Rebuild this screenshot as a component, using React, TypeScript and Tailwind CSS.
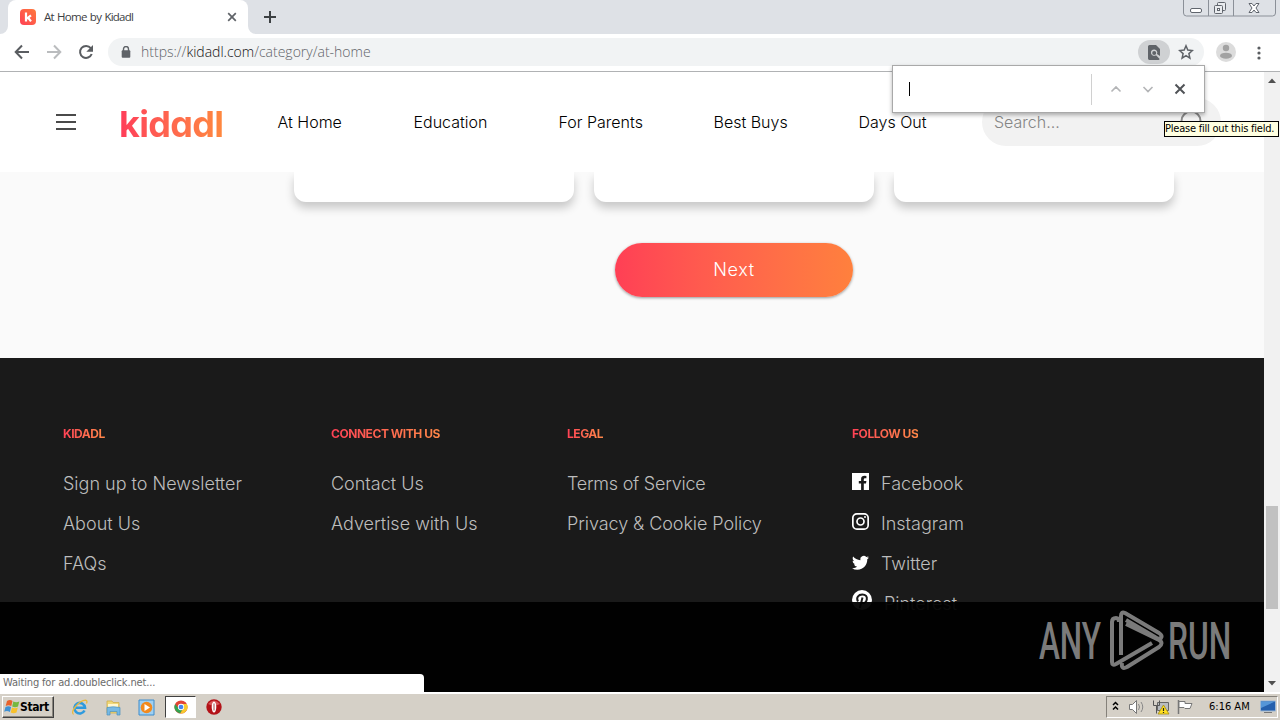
import * as React from 'react';
import clsx from 'clsx';

const INTER = "font-['Inter','Liberation_Sans',sans-serif]";
const TAHOMA = "font-['DejaVu_Sans_Condensed','DejaVu_Sans',sans-serif]";
const SEGOE = "font-['Open_Sans','Noto_Sans',sans-serif]";

/* ---------- Browser window ---------- */

function TabStrip() {
  return (
    <div className="flex h-[34px] shrink-0 justify-between bg-[#dee1e6]">
      <div className="flex items-center">
        <svg width="8" height="34" viewBox="0 0 8 34">
          <path d="M8 26v8H0a8 8 0 0 0 8-8z" fill="#fff" />
        </svg>
        <div className="flex h-full w-[240px] items-center rounded-t-lg bg-white pl-3 pr-[11px]">
          <svg width="16" height="16" viewBox="0 0 16 16">
            <defs>
              <linearGradient id="fav" x1="0" x2="1" y1="1" y2="0">
                <stop offset="0" stopColor="#ff4055" />
                <stop offset="1" stopColor="#ff7a3d" />
              </linearGradient>
            </defs>
            <rect width="16" height="16" rx="4" fill="url(#fav)" />
            <path d="M6 3.5v9M11 6.3 6.8 9.6M8.2 8.8l2.8 3.6" stroke="#fff" strokeWidth="2.2" fill="none" />
          </svg>
          <span
            className={clsx(
              SEGOE,
              'ml-2 whitespace-nowrap text-[11.5px] tracking-[-0.75px] text-[#3c4043] [word-spacing:1px]',
            )}
          >
            At Home by Kidadl
          </span>
          <svg className="ml-auto" width="10" height="10" viewBox="0 0 10 10">
            <path d="m1.2 1.2 7.6 7.6M8.8 1.2 1.2 8.8" stroke="#5f6368" strokeWidth="1.7" />
          </svg>
        </div>
        <svg width="8" height="34" viewBox="0 0 8 34">
          <path d="M0 26v8h8a8 8 0 0 1-8-8z" fill="#fff" />
        </svg>
        <svg className="ml-2" width="12" height="12" viewBox="0 0 12 12">
          <path d="M6 0v12M0 6h12" stroke="#3c4043" strokeWidth="2" />
        </svg>
      </div>
      <WindowControls />
    </div>
  );
}

function WindowControls() {
  return (
    <svg className="mr-[3px]" width="94" height="17" viewBox="0 0 94 17" fill="none" stroke="#8b9098">
      <path d="M.5 0v13a3 3 0 0 0 3 3h86a3 3 0 0 0 3-3V0M25.500 0v16M50.500 0v16" />
      <rect x="7.500" y="8.500" width="11" height="4" rx="1.500" fill="#fff" stroke="#60656d" />
      <g stroke="#60656d" fill="#e9ebee">
        <rect x="34.500" y="2.500" width="8" height="8" rx="1" />
        <rect x="31.500" y="5.500" width="8" height="8" rx="1" />
        <rect x="34.500" y="8.500" width="2" height="2" fill="#fff" />
      </g>
      <path
        d="M66 3.500h3l2 2.500 2-2.500h3L73 8l3 4.500h-3L71 10l-2 2.500h-3L69 8z"
        stroke="#60656d"
        fill="#fff"
      />
    </svg>
  );
}

function Toolbar() {
  return (
    <div className="flex h-[38px] shrink-0 items-center border-b border-[#b0b2b4] bg-white">
      <svg width="108" height="37" viewBox="0 0 108 37" fill="none" strokeWidth="2">
        <path d="M29 18H16M22 11.500 15.700 18 22 24.500" stroke="#5a5d61" />
        <path d="M47 18h13M54 11.500 60.300 18 54 24.500" stroke="#babcbe" />
        <path d="M90.800 14.200A6 6 0 1 0 91.700 20" stroke="#5a5d61" />
        <path d="M93 11v6.700h-6.700z" fill="#5a5d61" />
      </svg>
      <div className="-mt-px flex h-7 w-[1096px] items-center rounded-full bg-[#f1f3f4] pl-[13px]">
        <svg width="10" height="12" viewBox="0 0 10 12">
          <path d="M2.500 5V3a2.500 2.500 0 0 1 5 0v2" fill="none" stroke="#5f6368" strokeWidth="1.400" />
          <rect x=".7" y="4.300" width="8.600" height="7.500" rx="1" fill="#5f6368" />
        </svg>
        <span className={clsx(SEGOE, 'ml-[10px] whitespace-nowrap text-sm font-light text-[#5f6368]')}>
          https://<span className="text-[#111]">kidadl.com</span>/category/at-home
        </span>
        <div className="ml-auto flex h-6 w-8 items-center justify-center rounded-full bg-[#cfd1d3]">
          <svg width="12" height="15" viewBox="0 0 12 15">
            <path d="M1.500 0H8l4 4v7L9 9a3.200 3.200 0 1 0-1 1.200l3.700 3.700q-.5 1-1.200 1h-9Q0 15 0 13.500v-12Q0 0 1.500 0z" fill="#5f6368" />
            <circle cx="6.200" cy="8" r="2" fill="#5f6368" />
          </svg>
        </div>
        <svg className="ml-2 mr-[10px]" width="16" height="16" viewBox="0 0 16 16">
          <path
            d="m8 1.800 1.800 4.300 4.600.4-3.500 3.100 1 4.500L8 11.700l-3.900 2.400 1-4.500-3.500-3.100 4.600-.4z"
            fill="none"
            stroke="#5f6368"
            strokeWidth="1.500"
          />
        </svg>
      </div>
      <svg className="-mt-px ml-3" width="20" height="20" viewBox="0 0 20 20">
        <circle cx="10" cy="10" r="10" fill="#dcdcdc" />
        <circle cx="10" cy="6" r="3.200" fill="#a2a2a2" />
        <ellipse cx="10" cy="13.700" rx="6" ry="3" fill="#a2a2a2" />
      </svg>
      <svg className="ml-[21px]" width="4" height="14" viewBox="0 0 4 14" fill="#5a5d61">
        <circle cx="2" cy="2" r="1.600" />
        <circle cx="2" cy="7" r="1.600" />
        <circle cx="2" cy="12" r="1.600" />
      </svg>
    </div>
  );
}

function FindBar() {
  return (
    <div className="absolute left-[893px] top-[66px] z-20 flex h-[46px] w-[311px] items-center bg-white shadow-[0_0_0_1px_#a9a9a9,0_2px_4px_1px_rgba(0,0,0,0.3)]">
      <div className="ml-4 h-[14px] w-px bg-black" />
      <div className="ml-[181px] h-[31px] w-px bg-[#d0d0d0]" />
      <svg width="112" height="46" viewBox="0 0 112 46" fill="none">
        <path d="m19.500 25.500 4.500-4.500 4.500 4.500M51.500 21l4.500 4.500 4.500-4.500" stroke="#b4b5b7" strokeWidth="1.600" />
        <path d="m83.500 18.500 9 9M92.500 18.500l-9 9" stroke="#505357" strokeWidth="2" />
      </svg>
    </div>
  );
}

function Scrollbar() {
  return (
    <div className="flex w-4 flex-col items-center bg-[#f1f1f1]">
      <svg width="16" height="16" viewBox="0 0 16 16">
        <path d="m4 11 4-4.500 4 4.500z" fill="#505050" />
      </svg>
      <div className="mt-[418px] h-[103px] w-3 bg-[#c1c1c1]" />
      <svg className="mt-auto" width="16" height="17" viewBox="0 0 16 17">
        <path d="m4 6 4 4.500L12 6z" fill="#505050" />
      </svg>
    </div>
  );
}

/* ---------- Site ---------- */

const NAV = ['At Home', 'Education', 'For Parents', 'Best Buys', 'Days Out'];

function SiteHeader() {
  return (
    <header className="flex h-[100px] shrink-0 items-center bg-white pl-14">
      <div className="flex w-5 flex-col gap-[5px]">
        <div className="h-[2px] bg-[#4a4a4a]" />
        <div className="h-[2px] bg-[#4a4a4a]" />
        <div className="h-[2px] bg-[#4a4a4a]" />
      </div>
      <div className="ml-[43px] mt-[3px] w-[106px] shrink-0 whitespace-nowrap bg-linear-to-r from-[#ff3b59] to-[#ff893d] bg-clip-text font-['Inter'] text-[36px] font-bold leading-[48px] tracking-[-0.7px] text-transparent [font-feature-settings:'cv11','ss01']">
        kidadl
      </div>
      <nav className="ml-[52px] grid w-[705px] grid-cols-[136px_145px_155px_145px_auto] whitespace-nowrap pl-[0.5px] text-base font-light text-black">
        {NAV.map((item) => (
          <a key={item}>{item}</a>
        ))}
      </nav>
      <div className="flex h-12 w-[239px] items-center rounded-full bg-[#f2f2f2] pl-3 text-base font-light text-[#858585]">
        Search...
        <svg className="ml-auto mr-4" width="26" height="26" viewBox="0 0 26 26" fill="none" stroke="#8a8a8a" strokeWidth="2">
          <circle cx="12" cy="12" r="9.500" />
          <path d="m19 19 6 6" />
        </svg>
      </div>
    </header>
  );
}

function Results() {
  return (
    <main className="flex h-[186px] shrink-0 flex-col items-center overflow-hidden bg-[#fafafa] pl-[204px]">
      <div className="flex gap-5">
        {[0, 1, 2].map((i) => (
          <div key={i} className="h-[30px] w-[280px] rounded-b-xl bg-white shadow-[0_6px_10px_rgba(0,0,0,0.2)]" />
        ))}
      </div>
      <button className="mt-[41px] h-[54px] w-[238px] rounded-full bg-linear-to-r from-[#ff3f55] to-[#ff803d] text-lg font-[350] tracking-[0.6px] text-white shadow-[0_1px_3px_rgba(0,0,0,0.4)]">
        Next
      </button>
    </main>
  );
}

const FACEBOOK = (
  <svg className="mb-[6px]" width="17" height="17" viewBox="0 0 17 17">
    <path d="M0 0h17v17h-5.200v-6.500h2.200l.4-2.600h-2.600V6.300q0-1.100 1.200-1.100h1.400V2.900q-5.300-.8-5.300 3v2H6.800v2.600h2.300V17H0z" fill="#fff" />
  </svg>
);

const INSTAGRAM = (
  <svg className="mb-[6px]" width="17" height="17" viewBox="0 0 17 17" fill="none" stroke="#fff" strokeWidth="1.700">
    <rect x=".85" y=".85" width="15.300" height="15.300" rx="4" />
    <circle cx="8.500" cy="8.500" r="3.500" />
    <circle cx="13" cy="4" r="1" fill="#fff" stroke="none" />
  </svg>
);

const TWITTER = (
  <svg className="mb-[2px]" width="17" height="17" viewBox="0 1 24 24">
    <path
      d="M23.950 4.570a10 10 0 0 1-2.820.77 4.960 4.960 0 0 0 2.160-2.720c-.95.560-2 .960-3.130 1.180a4.920 4.920 0 0 0-8.380 4.480C7.690 8.100 4.070 6.130 1.640 3.160a4.820 4.820 0 0 0-.67 2.480c0 1.710.87 3.210 2.190 4.100a4.900 4.900 0 0 1-2.230-.62v.06a4.920 4.920 0 0 0 3.950 4.830 5 5 0 0 1-2.210.080 4.940 4.940 0 0 0 4.600 3.420A9.870 9.870 0 0 1 0 19.540a14 14 0 0 0 7.550 2.210c9.050 0 14-7.500 14-13.980 0-.21 0-.42-.020-.63a9.940 9.940 0 0 0 2.420-2.570z"
      fill="#fff"
    />
  </svg>
);

const PINTEREST = (
  <svg className="mb-[8px]" width="20" height="20" viewBox="0 0 20 20">
    <circle cx="10" cy="10" r="10" fill="#fff" />
    <path d="M6 11.500C3.800 7.500 6.500 4.500 10.300 4.500c3.500 0 5 2.300 4.500 5-.6 3.600-3.700 4.500-4.800 2.800M10.500 7.500 7.800 18" fill="none" stroke="#1a1a1a" strokeWidth="2" />
  </svg>
);

type Link = { label: string; icon?: React.ReactNode; className?: string };

const COLUMNS: { title: string; links: Link[] }[] = [
  { title: 'KIDADL', links: [{ label: 'Sign up to Newsletter' }, { label: 'About Us' }, { label: 'FAQs' }] },
  { title: 'CONNECT WITH US', links: [{ label: 'Contact Us' }, { label: 'Advertise with Us' }] },
  {
    title: 'LEGAL',
    links: [
      { label: 'Terms of Service', className: 'tracking-[-0.25px]' },
      { label: 'Privacy & Cookie Policy', className: 'tracking-[-0.08px]' },
    ],
  },
  {
    title: 'FOLLOW US',
    links: [
      { label: 'Facebook', icon: FACEBOOK },
      { label: 'Instagram', icon: INSTAGRAM },
      { label: 'Twitter', icon: TWITTER },
      { label: 'Pinterest', icon: PINTEREST },
    ],
  },
];

function SiteFooter() {
  return (
    <footer className="grid grow grid-cols-[268px_236px_285px_auto] bg-[#1a1a1a] pl-[63px] pt-[66px]">
      {COLUMNS.map(({ title, links }) => (
        <div key={title} className="flex flex-col items-start whitespace-nowrap">
          <h4 className="bg-linear-to-r from-[#ff4055] to-[#ff8748] bg-clip-text text-xs font-bold leading-5 tracking-[-0.45px] text-transparent">
            {title}
          </h4>
          <ul className="mt-5 text-lg font-light text-[#bdbdbd]">
            {links.map(({ label, icon, className }) => (
              <li key={label} className={clsx('flex h-10 items-center', className)}>
                {icon && <span className="mr-3">{icon}</span>}
                {label}
              </li>
            ))}
          </ul>
        </div>
      ))}
    </footer>
  );
}

function Watermark() {
  return (
    <svg
      className="font-['Roboto','Liberation_Sans',sans-serif]"
      width="200"
      height="66"
      viewBox="0 0 200 66"
      fill="#7b7b7b"
    >
      <g className="text-[52px] font-medium">
        <text transform="translate(3 52) scale(.62 1)" textLength="100" lengthAdjust="spacingAndGlyphs">
          ANY
        </text>
        <text transform="translate(132 52) scale(.62 1)" textLength="102" lengthAdjust="spacingAndGlyphs">
          RUN
        </text>
      </g>
      <g fill="none" stroke="#7b7b7b" strokeWidth="4" strokeLinejoin="round">
        <path d="M83 15q0-4-3-4-4 0-4 4v40q0 4 4 2l36-21" />
        <path d="M85 48V9q0-5 4-3l34 20q4 3 2 5-3 2-6-1L90 13" />
        <path d="m86 56q-1 7 5 4l32-20q5-4 0-7L90 17" />
      </g>
    </svg>
  );
}

function StatusBubble() {
  return (
    <div
      className={clsx(
        TAHOMA,
        'absolute bottom-0 left-0 h-[18px] w-[424px] rounded-tr bg-white pl-[3px] text-[11px] leading-[18px] tracking-[-0.15px] text-[#6b6b6b]',
      )}
    >
      Waiting for ad.doubleclick.net...
    </div>
  );
}

/* ---------- Windows taskbar ---------- */

function WindowsFlag() {
  return (
    <svg width="16" height="16" viewBox="0 0 16 16">
      <path d="M3 2q3-2 5.500 0L7.300 7Q4.500 5.500 1.700 7z" fill="#e8622c" />
      <path d="M9.300 2.500q3 1.500 6 0L14 7.500q-3 1.500-5.800 0z" fill="#76b83f" />
      <path d="M1.500 8q3-1.500 5.600 0L5.900 13Q3 11.300.2 12.800z" fill="#3f91d4" />
      <path d="M8 8.500q3 1.500 5.800 0L12.500 13.500q-3 1.500-5.800 0z" fill="#f8c12c" />
    </svg>
  );
}

function Launchers() {
  return (
    <>
      <svg className="ml-[17px]" width="17" height="17" viewBox="0 0 17 17" fill="none">
        <path d="M13.500 11.500A5.300 5.300 0 1 1 14 8.700H5" stroke="#2d9ade" strokeWidth="2.600" />
        <path d="M2.500 15.500C-1.500 13 8 1.500 14.500 1.200q2.300.3 1 3.300" stroke="#e9b93d" strokeWidth="1.300" />
      </svg>
      <svg className="ml-[17px]" width="17" height="17" viewBox="0 0 17 17">
        <path d="M2 2h5l1 1.500h6V14H2z" fill="#f0d878" stroke="#cfae4c" strokeWidth=".8" />
        <path d="M3 5h10v3H3z" fill="#fff7d0" />
        <path d="M2 8.500q6-1.500 13 0V16h-3v-3.500H5V16H2z" fill="#76b9e4" stroke="#4c91bd" strokeWidth=".7" />
      </svg>
      <svg className="ml-4" width="17" height="17" viewBox="0 0 17 17">
        <path d="M1 1h15v15H1z" fill="#9fd0f2" stroke="#3c8ccc" />
        <circle cx="8.500" cy="8.500" r="5.800" fill="#f28a1e" />
        <path d="m6.500 5 5.500 3.500L6.500 12z" fill="#fff" />
      </svg>
      <div className="ml-[10px] flex h-[22px] w-[31px] items-center justify-center border border-b-white border-l-[#404040] border-r-white border-t-[#404040] bg-white">
        <svg width="14" height="14" viewBox="0 0 16 16">
          <circle cx="8" cy="8" r="7.500" fill="#e24435" />
          <path d="M1.200 4.700A7.500 7.500 0 0 0 7 15.400L10.500 9.500 5 9z" fill="#32a350" />
          <path d="M8 4.500h6.700A7.500 7.500 0 0 1 7 15.400L11 9z" fill="#f7ca2e" />
          <circle cx="8" cy="8" r="3.600" fill="#fff" />
          <circle cx="8" cy="8" r="2.700" fill="#4384ef" />
        </svg>
      </div>
      <svg className="ml-[10px]" width="16" height="16" viewBox="0 0 16 16">
        <circle cx="8" cy="8" r="7.700" fill="#b31218" />
        <path d="M2 5Q8-2 14 5 8 8 2 5z" fill="#d8575a" />
        <ellipse cx="8" cy="8" rx="2.300" ry="5.500" fill="#fff" />
        <path d="M8 4.500v7" stroke="#a54a4c" />
      </svg>
    </>
  );
}

function Tray() {
  return (
    <div className="ml-auto mr-[2px] flex h-[22px] w-[172px] items-center border border-b-white border-l-[#85817a] border-r-white border-t-[#85817a]">
      <svg width="95" height="20" viewBox="0 0 95 20" fill="none">
        <path d="m6 8 2.500-2.500L11 8M6 12.500 8.500 10l2.500 2.500" stroke="#000" strokeWidth="1.500" />
        <path d="M22.500 7.500h3l4-4v13l-4-4h-3z" fill="#fff" stroke="#777" />
        <path d="M31.500 7q2 3 0 6M34 5q3.500 5 0 10" stroke="#888" />
        <path d="M50.500 5.500h11v8h-11z" fill="#b9bcc0" stroke="#666" />
        <path d="M46.500 3.500v5h3v8M49.500 8.500h3v-5" stroke="#555" />
        <path d="m56.500 8 5.500 9H51z" fill="#ffdf20" stroke="#a38b10" strokeWidth=".8" />
        <path d="M56.500 11v3m0 1v1" stroke="#222" strokeWidth="1.200" />
        <path d="M71.500 3v14" stroke="#777" strokeWidth="1.500" />
        <path d="M72 4.500h6v2h7l-2 5h-5l-1-1h-5z" fill="#fff" stroke="#777" />
      </svg>
      <span className={clsx(TAHOMA, 'ml-[7px] whitespace-nowrap text-[11px] text-black')}>6:16 AM</span>
      <svg className="ml-auto mr-[1px]" width="16" height="14" viewBox="0 0 16 14">
        <path d="M.5 1h15v10H.5z" fill="#2560ad" stroke="#9db7d3" />
        <path d="M1 1.500h14L1 8z" fill="#5596d8" />
        <path d="M4 12.500h8" stroke="#777" />
      </svg>
    </div>
  );
}

function Taskbar() {
  return (
    <div className="flex h-7 shrink-0 items-center border-t-2 border-white bg-[#d5d0c7] pl-[2px] shadow-[inset_0_1px_0_#d5d0c7]">
      <div
        className={clsx(
          TAHOMA,
          'flex h-[22px] w-[52px] shrink-0 items-center border border-b-[#404040] border-l-white border-r-[#404040] border-t-white pl-px text-[12px] font-bold tracking-[-0.4px] text-black shadow-[inset_-1px_-1px_0_#8a867e]',
        )}
      >
        <WindowsFlag />
        Start
      </div>
      <Launchers />
      <Tray />
    </div>
  );
}

export default function App() {
  return (
    <div className={clsx(INTER, 'relative flex h-[720px] w-[1280px] flex-col overflow-hidden bg-white')}>
      <TabStrip />
      <Toolbar />
      <div className="relative flex h-[620px] shrink-0">
        <div className="flex w-[1264px] flex-col overflow-hidden">
          <SiteHeader />
          <Results />
          <SiteFooter />
        </div>
        <Scrollbar />
        <div className="absolute bottom-0 left-0 flex h-[90px] w-[1264px] items-start justify-end bg-black/95 pr-7 pt-[5px]">
          <Watermark />
        </div>
        <StatusBubble />
      </div>
      <Taskbar />
      <FindBar />
      <div
        className={clsx(
          TAHOMA,
          'absolute left-[1164px] top-[121px] z-30 h-4 w-[115px] whitespace-nowrap border border-black bg-[#ffffe1] text-[11px] leading-[14px] tracking-[-0.22px] text-black',
        )}
      >
        Please fill out this field.
      </div>
    </div>
  );
}
